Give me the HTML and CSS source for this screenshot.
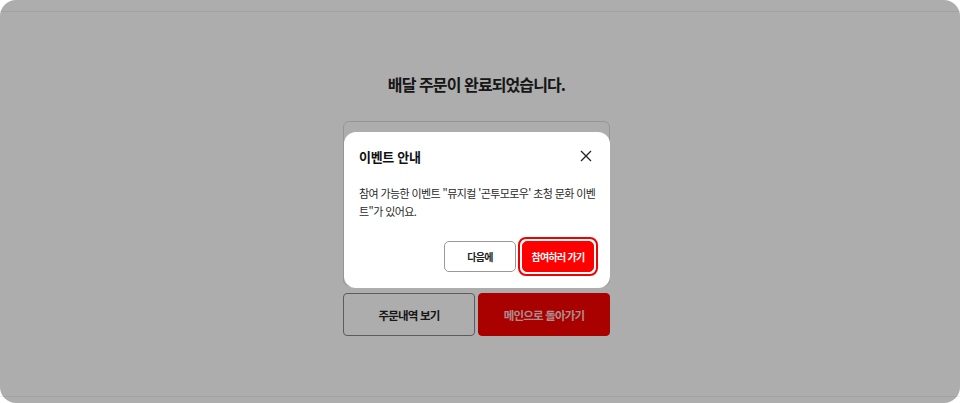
FILE: index.html
```html
<!DOCTYPE html>
<html lang="ko">
<head>
<meta charset="utf-8">
<link rel="stylesheet" href="styles.css">
</head>
<body>
<div class="page">
  <div class="header"></div>
  <main class="content">
    <h1 class="title">배달 주문이 완료되었습니다.</h1>
    <div class="summary"></div>
    <div class="actions">
      <button class="btn btn-outline">주문내역 보기</button>
      <button class="btn btn-red">메인으로 돌아가기</button>
    </div>
  </main>
  <div class="footer"></div>
</div>
<div class="overlay">
  <div class="modal">
    <div class="modal-head">
      <h2 class="modal-title">이벤트 안내</h2>
      <button class="close" aria-label="닫기">
        <svg width="12" height="12" viewBox="0 0 12 12"><path d="M1 1L11 11M11 1L1 11" stroke="#222" stroke-width="1.3" fill="none"/></svg>
      </button>
    </div>
    <p class="modal-text">참여 가능한 이벤트 "뮤지컬 '곤투모로우' 초청 문화 이벤트"가 있어요.</p>
    <div class="modal-actions">
      <button class="mbtn mbtn-outline">다음에</button>
      <span class="focus-ring"><button class="mbtn mbtn-red">참여하러 가기</button></span>
    </div>
  </div>
</div>
</body>
</html>
```
FILE: styles.css
```css
* { box-sizing: border-box; }
html, body { margin: 0; padding: 0; }
body {
  width: 960px;
  height: 403px;
  overflow: hidden;
  background: #fff;
  font-family: "Noto Sans CJK KR", "Noto Sans", sans-serif;
  position: relative;
}
.page {
  height: 403px;
  display: flex;
  flex-direction: column;
}
.header {
  height: 12px;
  border-bottom: 1px solid #f0f0f0;
  flex: none;
}
.content {
  flex: 1;
  display: flex;
  flex-direction: column;
  align-items: center;
  padding-top: 60px;
  padding-right: 7px;
}
.title {
  margin: 0;
  font-size: 16px;
  font-weight: 700;
  color: #222;
  letter-spacing: -0.9px;
  line-height: 24px;
}
.summary {
  margin-top: 25px;
  width: 267px;
  height: 165px;
  border: 1px solid #ddd;
  border-radius: 6px;
}
.actions {
  margin-top: 7px;
  display: flex;
  gap: 3px;
}
.btn {
  width: 132px;
  height: 43px;
  border-radius: 4px;
  font-family: inherit;
  font-size: 11.5px;
  font-weight: 700;
  letter-spacing: -0.8px;
}
.btn-outline {
  background: #fff;
  border: 1px solid #888;
  color: #222;
}
.btn-red {
  background: #fa0000;
  border: 1px solid #fa0000;
  color: rgba(255,255,255,0.82);
}
.footer {
  height: 7px;
  border-top: 1px solid #f0f0f0;
  flex: none;
}
.overlay {
  position: absolute;
  inset: 0;
  background: rgba(0,0,0,0.32);
  border-radius: 16px;
  display: flex;
  justify-content: center;
  padding-top: 132px;
  padding-right: 7px;
}
.modal {
  width: 266px;
  height: 156px;
  background: #fff;
  border-radius: 12px;
  padding: 14px 12px 0 15px;
  margin-left: 1px;
}
.modal-head {
  display: flex;
  justify-content: space-between;
  align-items: center;
  height: 20px;
}
.modal-title {
  margin: 0;
  font-size: 13px;
  font-weight: 700;
  color: #111;
  letter-spacing: -0.3px;
}
.close {
  border: 0;
  background: none;
  padding: 0;
  width: 12px;
  height: 12px;
  display: flex;
  margin-right: 6px;
}
.modal-text {
  margin: 18px 0 0;
  font-size: 11px;
  line-height: 18px;
  color: #2a2a2a;
  letter-spacing: -0.6px;
}
.modal-actions {
  margin-top: 17px;
  display: flex;
  justify-content: flex-end;
  align-items: center;
  gap: 2px;
}
.mbtn {
  height: 31px;
  border-radius: 5px;
  font-family: inherit;
  font-size: 10px;
  font-weight: 700;
  letter-spacing: -0.7px;
  padding: 0;
}
.mbtn-outline {
  width: 72px;
  background: #fff;
  border: 1px solid #999;
  color: #222;
}
.focus-ring {
  display: flex;
  padding: 2px;
  border: 2px solid #f00000;
  border-radius: 8px;
}
.mbtn-red {
  width: 72px;
  background: #ff0000;
  border: 1px solid #ff0000;
  color: #fff;
}
```
